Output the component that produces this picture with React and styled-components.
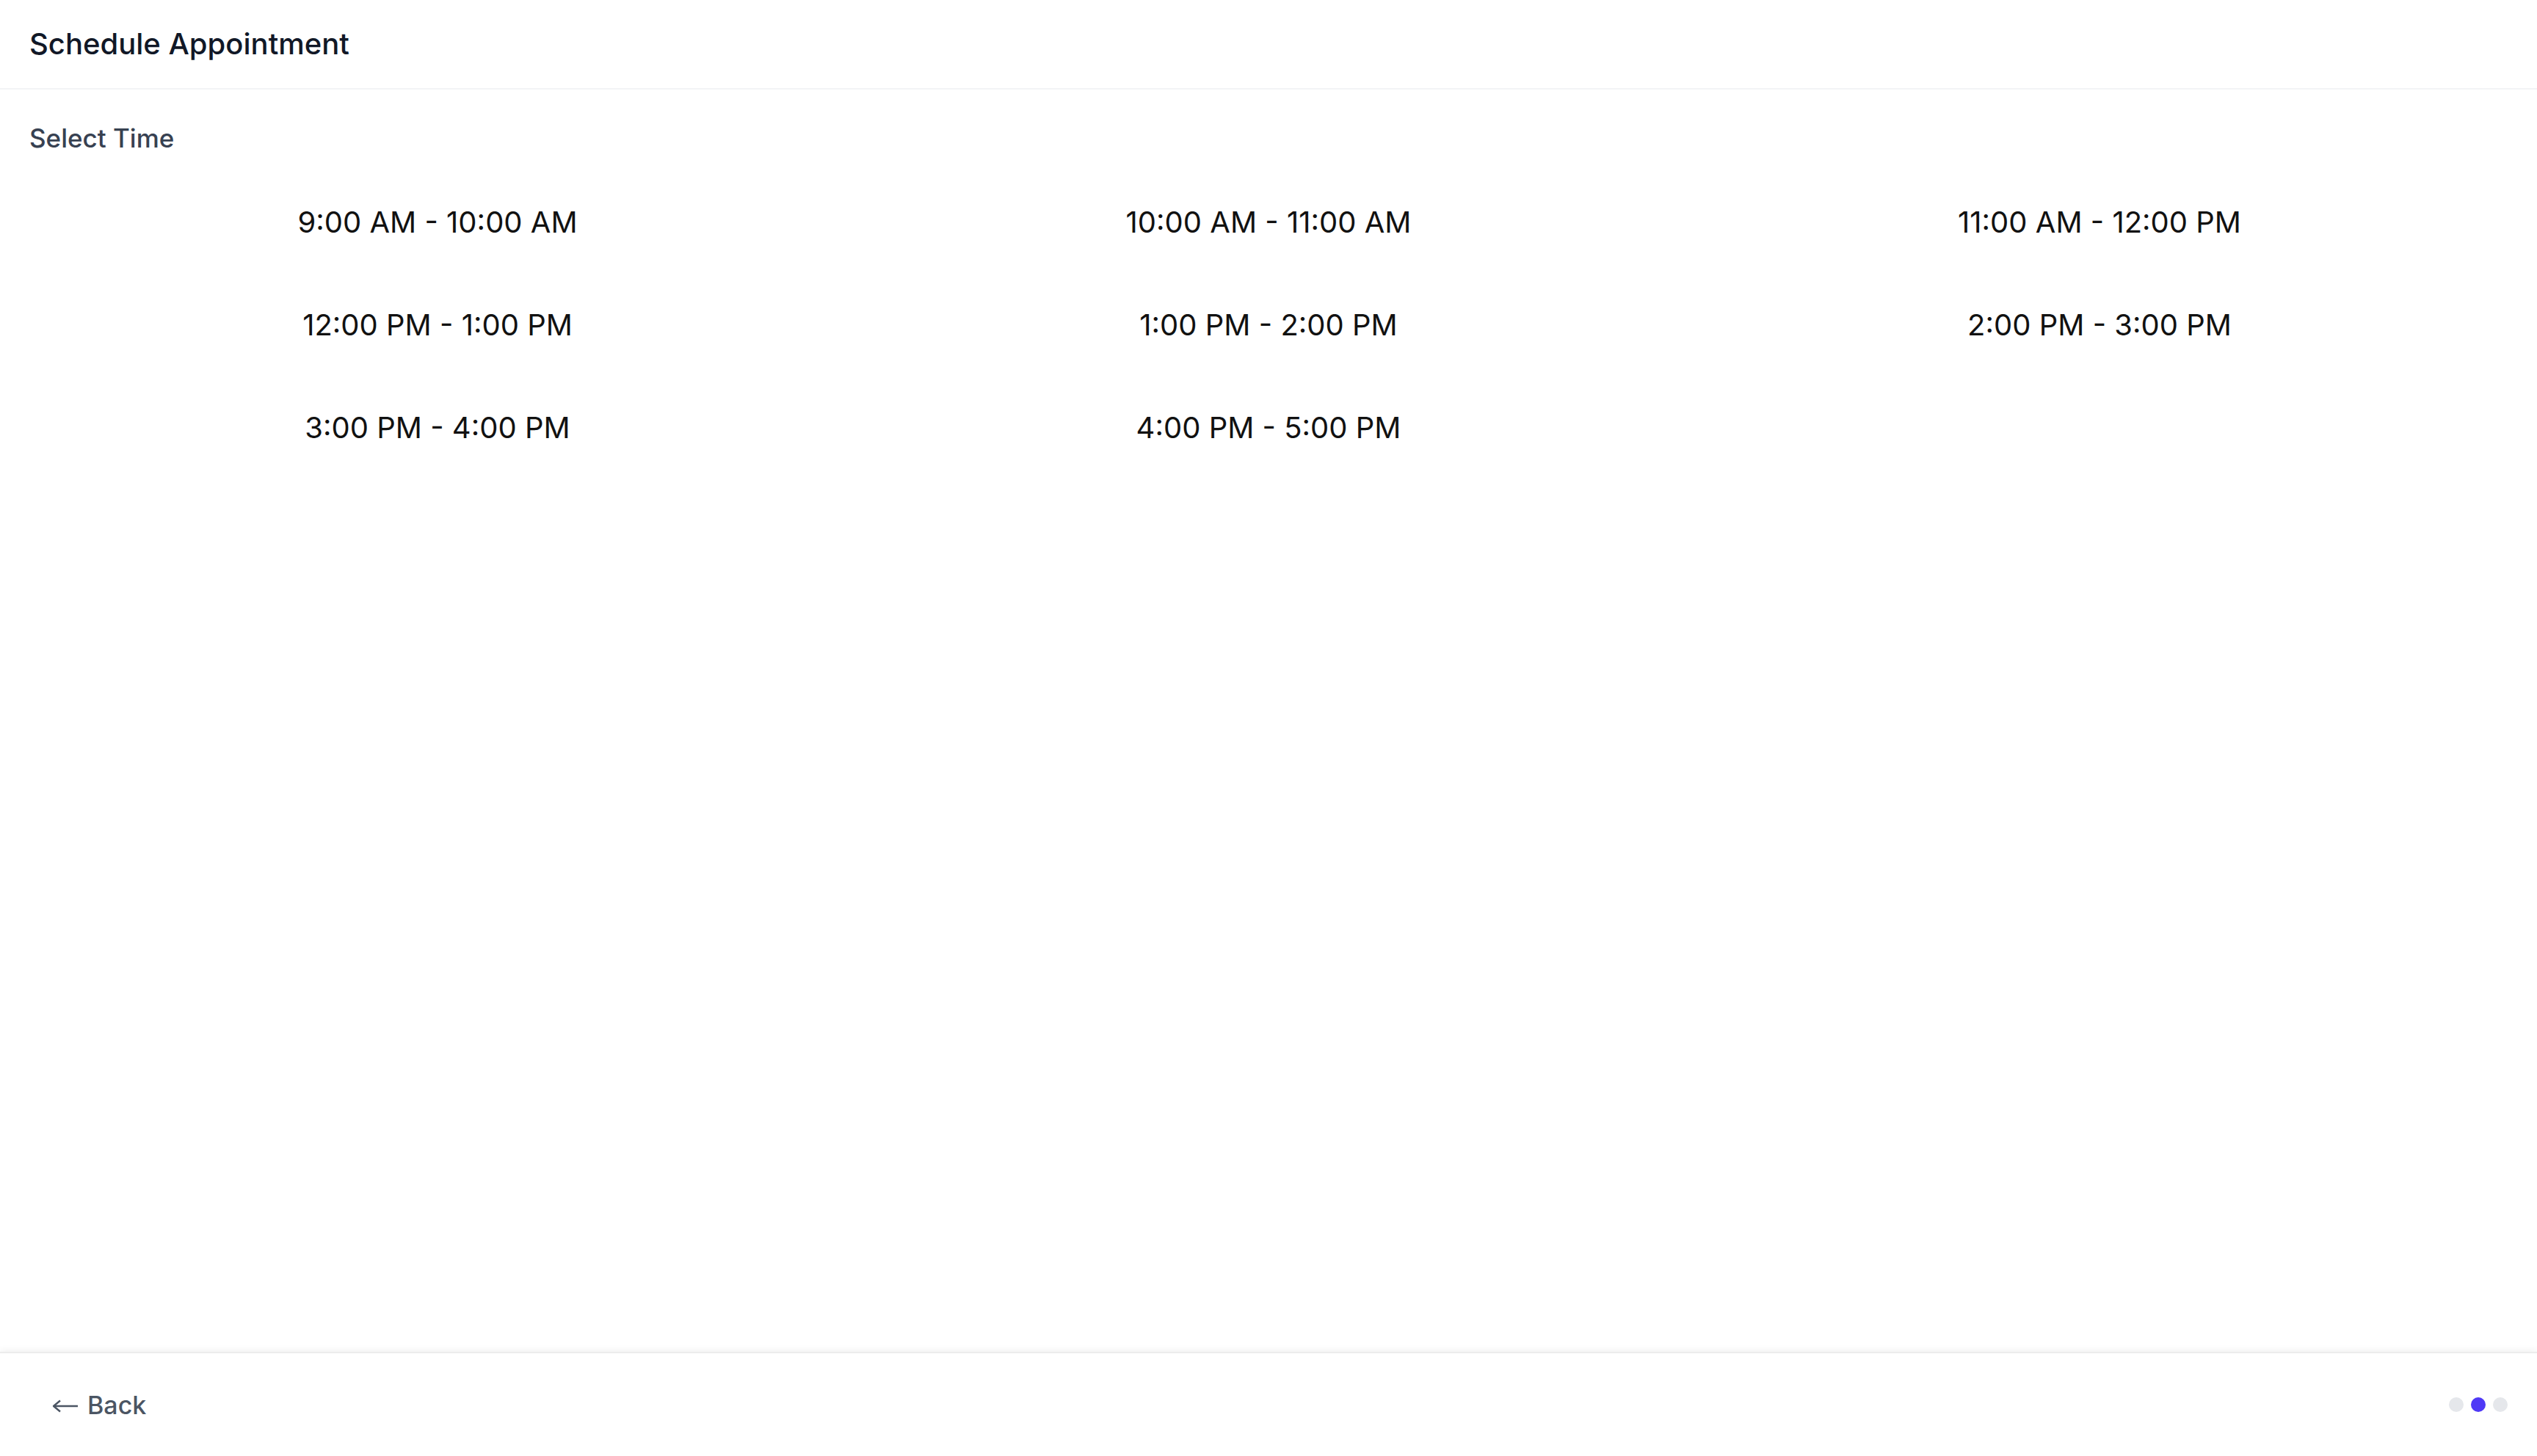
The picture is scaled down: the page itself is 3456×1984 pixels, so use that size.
import React from "react";
import styled, { createGlobalStyle } from "styled-components";

const GlobalStyle = createGlobalStyle`
  html, body, #root {
    height: 100%;
  }
  body {
    margin: 0;
    background: #ffffff;
    font-family: Inter, "Noto Sans", "Liberation Sans", sans-serif;
    -webkit-font-smoothing: antialiased;
  }
  * {
    box-sizing: border-box;
  }
`;

const StyledPage = styled.div`
  display: flex;
  flex-direction: column;
  min-height: 100vh;
  background: #ffffff;
`;
StyledPage.displayName = "StyledPage";

const StyledHeader = styled.header`
  display: flex;
  align-items: center;
  height: 122px;
  padding: 0 40px;
  border-bottom: 2px solid #f3f4f6;
`;
StyledHeader.displayName = "StyledHeader";

const StyledTitle = styled.h1`
  margin: 0;
  color: #111827;
  font-size: 40px;
  font-weight: 500;
  line-height: 56px;
`;
StyledTitle.displayName = "StyledTitle";

const StyledContent = styled.main`
  display: flex;
  flex-direction: column;
  flex: 1;
  padding: 40px;
`;
StyledContent.displayName = "StyledContent";

const StyledLabel = styled.div`
  margin-bottom: 29px;
  padding-top: 1px;
  color: #374151;
  font-size: 35px;
  font-weight: 500;
  line-height: 50px;
`;
StyledLabel.displayName = "StyledLabel";

const StyledSlots = styled.div`
  display: grid;
  grid-template-columns: repeat(3, 1fr);
  gap: 20px;
`;
StyledSlots.displayName = "StyledSlots";

const StyledSlot = styled.button`
  display: flex;
  align-items: center;
  justify-content: center;
  height: 120px;
  padding: 0 32px;
  border: none;
  border-radius: 16px;
  background: ${({ selected }) => (selected ? "#eef2ff" : "transparent")};
  color: #111111;
  font-family: inherit;
  font-size: 40px;
  font-weight: 400;
  cursor: pointer;
`;
StyledSlot.displayName = "StyledSlot";

const StyledFooter = styled.footer`
  display: flex;
  align-items: center;
  justify-content: space-between;
  height: 142px;
  padding: 0 40px;
  border-top: 2px solid #ececec;
  box-shadow: 0 -3px 8px rgba(0, 0, 0, 0.05);
`;
StyledFooter.displayName = "StyledFooter";

const StyledBackButton = styled.button`
  display: flex;
  align-items: center;
  gap: 12px;
  padding: 0 31px;
  border: none;
  background: none;
  color: #4b5563;
  font-family: inherit;
  font-size: 34px;
  font-weight: 500;
  cursor: pointer;
`;
StyledBackButton.displayName = "StyledBackButton";

const StyledArrow = styled.svg`
  width: 36px;
  height: 20px;
  margin-top: 4px;
`;
StyledArrow.displayName = "StyledArrow";

const StyledDots = styled.div`
  display: flex;
  align-items: center;
  gap: 10px;
`;
StyledDots.displayName = "StyledDots";

const StyledDot = styled.span`
  width: 20px;
  height: 20px;
  border-radius: 50%;
  background: ${({ active }) => (active ? "#4f39f6" : "#e5e7eb")};
`;
StyledDot.displayName = "StyledDot";

const timeSlots = [
  { id: "slot1", label: "9:00 AM - 10:00 AM" },
  { id: "slot2", label: "10:00 AM - 11:00 AM" },
  { id: "slot3", label: "11:00 AM - 12:00 PM" },
  { id: "slot4", label: "12:00 PM - 1:00 PM" },
  { id: "slot5", label: "1:00 PM - 2:00 PM" },
  { id: "slot6", label: "2:00 PM - 3:00 PM" },
  { id: "slot7", label: "3:00 PM - 4:00 PM" },
  { id: "slot8", label: "4:00 PM - 5:00 PM" }
];

const steps = ["date", "time", "confirm"];

const LongArrow = () => (
  <StyledArrow viewBox="0 0 36 20" fill="none" stroke="currentColor" strokeWidth="2.4">
    <path d="M2 10 H35" />
    <path d="M11 2.5 L2 10 L11 17.5" strokeLinejoin="round" />
  </StyledArrow>
);

const getSlots = (slots, selectedId, onSelect) => (
  <StyledSlots data-qa="time-slots">
    {slots.map(slot => (
      <StyledSlot
        key={slot.id}
        selected={slot.id === selectedId}
        onClick={() => onSelect(slot.id)}
      >
        {slot.label}
      </StyledSlot>
    ))}
  </StyledSlots>
);

const getStepDots = current => (
  <StyledDots data-qa="step-dots">
    {steps.map((step, index) => (
      <StyledDot key={step} active={index === current} />
    ))}
  </StyledDots>
);

const App = () => {
  const [selected, setSelected] = React.useState(null);

  return (
    <StyledPage data-qa="schedule">
      <GlobalStyle />
      <StyledHeader>
        <StyledTitle>Schedule Appointment</StyledTitle>
      </StyledHeader>
      <StyledContent>
        <StyledLabel>Select Time</StyledLabel>
        {getSlots(timeSlots, selected, setSelected)}
      </StyledContent>
      <StyledFooter>
        <StyledBackButton>
          <LongArrow />
          <span>Back</span>
        </StyledBackButton>
        {getStepDots(1)}
      </StyledFooter>
    </StyledPage>
  );
};

export default App;
